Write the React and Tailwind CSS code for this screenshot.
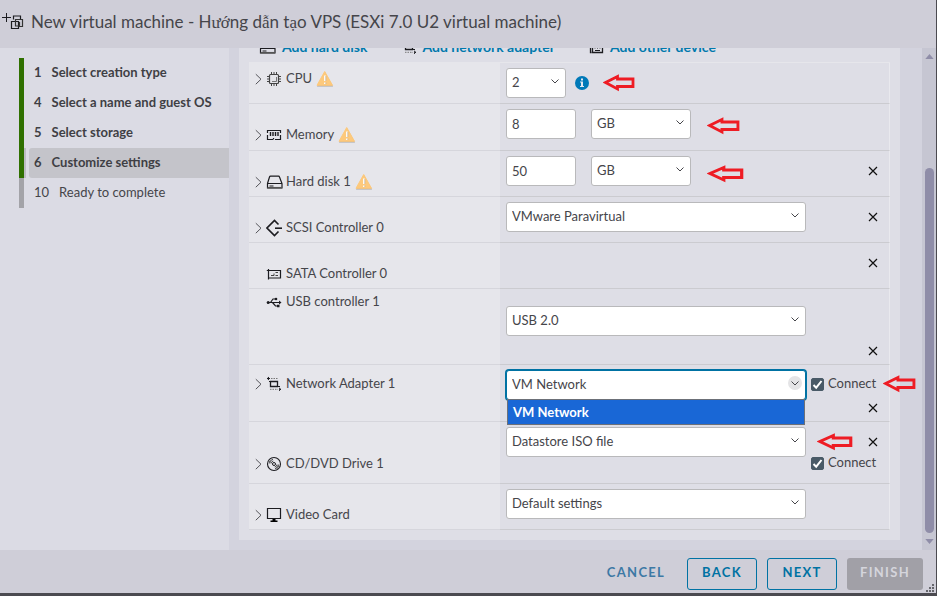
import React, { useState } from 'react';

const steps = [
  { num: 1, title: 'Select creation type', state: 'done' },
  { num: 4, title: 'Select a name and guest OS', state: 'done' },
  { num: 5, title: 'Select storage', state: 'done' },
  { num: 6, title: 'Customize settings', state: 'current' },
  { num: 10, title: 'Ready to complete', state: 'todo' },
];

/* Icons */
function Icon({ children, className = 'w-4 h-4', box = '0 0 16 16' }) {
  return (
    <svg viewBox={box} className={`shrink-0 ${className}`} fill="none" stroke="#1c1c20" strokeWidth="1" aria-hidden="true">
      {children}
    </svg>
  );
}

function VmIcon() {
  return (
    <Icon className="w-6 h-5" box="0 0 24 20">
      <path d="M2 5.5h9M6.500 1v9" />
      <path d="M13.500 7.500V4h7v3M11.500 9.500h7v7h-7z" strokeWidth="1.200" />
      <path d="M19 14.500h3.500v-7h-7v6.500h4v-4" strokeWidth="1.200" stroke="#333" />
    </Icon>
  );
}

function CpuIcon() {
  return (
    <Icon>
      <rect x="3.5" y="3.5" width="9" height="9" rx="1" stroke="#444" strokeWidth="1.2" />
      <path d="M10.5 6v4.5H6" stroke="#777" />
      <path d="M5.5 1v2M8 1v2M10.5 1v2M5.5 13v2M8 13v2M10.5 13v2M1 5.5h2M1 8h2M1 10.5h2M13 5.5h2M13 8h2M13 10.5h2" stroke="#444" />
    </Icon>
  );
}

function MemoryIcon() {
  return (
    <Icon>
      <path d="M1.5 6V3.5h13V6M1.5 8v4.5H7M9 12.5h5.5V8M7.5 11v1.5" strokeWidth="1.2" />
      <path d="M4.5 5v4M7 5v4M9.5 5v4M12 5v4" strokeWidth="1.4" />
    </Icon>
  );
}

function DiskIcon() {
  return (
    <Icon className="w-[18px] h-4" box="0 0 18 16">
      <path d="M1.5 9.500L3.500 3q.3-.8 1-.8h8q.8 0 1 .8l2.500 6.500v4.500H1.500z" strokeWidth="1.2" />
      <path d="M1.500 9.500h14.500M3.500 12h4" />
      <path d="M1.500 13.700h14.500" stroke="#555" strokeWidth="1.500" />
    </Icon>
  );
}

function ScsiIcon() {
  return (
    <Icon className="w-[18px] h-[18px]" box="0 0 18 18">
      <path d="M12.500 5.500L8.500 1.500L1 9l7.500 7.500l4-4" strokeWidth="1.600" />
      <path d="M9 9.200h7" strokeWidth="1.600" />
    </Icon>
  );
}

function SataIcon() {
  return (
    <Icon>
      <path d="M.8 4.500h13.700v7.500H2.500M2.500 3v10.500" strokeWidth="1.200" />
      <path d="M5 9.500h3v-2M9.500 6.500H12M9.500 9.500H12" stroke="#444" />
    </Icon>
  );
}

function UsbIcon() {
  return (
    <Icon>
      <path d="M2 8.500h12M4.500 8.500L7 5h2.500M6.500 8.500l3 3.500H12" strokeWidth="1.200" />
      <circle cx="2.200" cy="8.500" r="1.500" fill="#1c1c20" stroke="none" />
      <circle cx="10" cy="5" r="1.300" fill="#1c1c20" stroke="none" />
      <path d="M13 6.500l2.500 2l-2.500 2zM11 10.800h2.500v2.400H11z" fill="#1c1c20" stroke="none" />
    </Icon>
  );
}

function NetworkIcon() {
  return (
    <Icon>
      <path d="M4.500 5.500h7v5h-7z" strokeWidth="1.300" />
      <path d="M3 5.500h1.500M11.500 10.500H14" />
      <path d="M1 2.500h3" />
      <path d="M5 2.500h7" strokeDasharray="1.500 1" stroke="#777" />
      <path d="M3 1L1.300 2.500L3 4M13 13.300h2M13 11.800l1.700 1.500l-1.700 1.500" />
      <path d="M4 13.300h8" strokeDasharray="1.500 1" stroke="#777" />
    </Icon>
  );
}

function DiscIcon() {
  return (
    <Icon>
      <circle cx="8" cy="8" r="6.500" strokeWidth="1.100" />
      <circle cx="8" cy="8" r="1.500" />
      <path d="M3.300 7.500A4.800 4.800 0 0 1 7 3.300M5 7.500A3 3 0 0 1 7.300 5M12.700 8.500A4.800 4.800 0 0 1 9 12.700M11 8.500A3 3 0 0 1 8.700 11" strokeWidth=".8" />
      <path d="M2.500 5L5.500 6.500M10.500 9.500l3 1.500M10 10.500l1.500 2.500" stroke="#666" />
    </Icon>
  );
}

function ScreenIcon() {
  return (
    <Icon>
      <path d="M1.500 1.500h13v10h-13z" strokeWidth="1.200" />
      <path d="M6.500 12h3v1.500h2V15h-7v-1.500h2z" fill="#000" stroke="none" />
    </Icon>
  );
}

function OtherIcon() {
  return (
    <Icon>
      <path d="M1.500 2v11.500h1M3.500 4.500h10v9h-10z" strokeWidth="1.300" />
      <path d="M6 7v2.500M8.500 7v2.500M11 7v2.500M6 11.500h5" />
    </Icon>
  );
}

function WarningIcon() {
  return (
    <svg viewBox="0 0 18 16" className="w-[18px] h-4 shrink-0" role="img" aria-label="Warning">
      <path d="M9 1L17 15.500H1z" fill="#a5a3a3" />
      <path d="M8.700 .5L16.500 14.300H1z" fill="#fdc97c" stroke="#fdc97c" strokeLinejoin="round" />
      <path d="M8.900 4.500v5.500M8.900 11.500v1.500" stroke="#fff" strokeWidth="1.600" />
      <path d="M9.800 5v5M9.800 11.500v1.500" stroke="#aaa" strokeWidth=".6" />
    </svg>
  );
}

function RedArrow({ className = 'w-8 h-[18px]' }) {
  return (
    <svg viewBox="0 0 32 18" className={`shrink-0 ${className}`} preserveAspectRatio="none" aria-hidden="true">
      <path d="M2.500 8.500L14.500 2.500V5H30V12.500H14.500V15z" fill="none" stroke="#ee1c24" strokeWidth="2.800" />
    </svg>
  );
}

function RemoveButton({ className = '' }) {
  return (
    <button type="button" aria-label="Remove" className={`w-4 h-4 flex items-center justify-center shrink-0 ${className}`}>
      <svg viewBox="0 0 10 10" className="w-2.5 h-2.5" stroke="#111" strokeWidth="1.2">
        <path d="M1 1l8 8M9 1l-8 8" />
      </svg>
    </button>
  );
}

function Select({ label, options, className = 'w-[300px]', open = false }) {
  return (
    <div className={`relative shrink-0 ${className}`}>
      <select
        aria-label={label}
        defaultValue={options[0]}
        className={`block w-full h-[30px] appearance-none rounded-[3px] bg-white pl-[5px] pr-6 text-[13px] text-[#45454a] border outline-none ${
          open ? 'border-[#0072a3] ring-1 ring-[#0072a3]' : 'border-[#b9b9bb]'
        }`}
      >
        {options.map((option) => <option key={option}>{option}</option>)}
      </select>
      <span className={`absolute right-1 top-1.5 w-3.5 h-3.5 rounded-full pointer-events-none flex items-center justify-center ${open ? 'bg-[#e4e4e6]' : ''}`}>
        <svg viewBox="0 0 8 5" className="w-2 h-[5px]" fill="none" stroke="#45454a">
          <path d="M.5 .5L4 4L7.500 .5" />
        </svg>
      </span>
      {open && (
        <div className="absolute z-10 left-px right-px top-[29px] h-[26px] px-[5px] leading-6 bg-[#1967d6] border border-[#6c7078] text-white font-bold">
          {options[0]}
        </div>
      )}
    </div>
  );
}

function TextBox({ label, value }) {
  return (
    <input
      type="text"
      aria-label={label}
      defaultValue={value}
      className="w-[70px] h-[30px] rounded-[3px] bg-white border border-[#b9b9bb] px-[5px] text-[13px] text-[#45454a] outline-none"
    />
  );
}

function Connect() {
  const [checked, setChecked] = useState(true);

  return (
    <label className="flex items-center gap-1 h-5">
      <span className="relative w-[13px] h-[13px]">
        <input
          type="checkbox"
          checked={checked}
          onChange={(e) => setChecked(e.target.checked)}
          className="block w-[13px] h-[13px] appearance-none rounded-[2px] border border-[#495a67] checked:bg-[#495a67]"
        />
        {checked && (
          <svg viewBox="0 0 13 13" className="absolute inset-0 pointer-events-none" fill="none" stroke="#fff" strokeWidth="2">
            <path d="M2.500 7l2.700 2.700L10.500 3" />
          </svg>
        )}
      </span>
      Connect
    </label>
  );
}

function Row({ icon, name, height, labelPad, fieldPad = 'pt-[5px]', expandable = true, warning, children }) {
  return (
    <div className={`flex ${height}`}>
      <div className={`w-[251px] shrink-0 bg-[#e6e6eb] border-b border-[#d6d6dc] ${labelPad}`}>
        <div className="flex items-center h-5 pl-1.5">
          {expandable ? (
            <button type="button" aria-label={`Expand ${name}`} className="w-[11px] h-5 shrink-0">
              <svg viewBox="0 0 11 20" className="w-[11px] h-5" fill="none" stroke="#55555a">
                <path d="M.8 5.200L6 10.200L.8 15.200" />
              </svg>
            </button>
          ) : <span className="w-[11px]" />}
          <span className="w-[18px] h-5 flex items-center shrink-0">{icon}</span>
          <span className="leading-5 pl-0.5 pb-0.5">{name}</span>
          {warning && <span className="ml-1"><WarningIcon /></span>}
        </div>
      </div>
      <div className={`flex-1 flex items-start pl-1.5 pr-2 border-b border-r border-b-[#cbcbd0] border-r-[#e9e9ee] ${fieldPad}`}>
        {children}
      </div>
    </div>
  );
}

function HardwareTable() {
  return (
    <div className="border-t border-[#e6e6eb]">
      <Row icon={<CpuIcon />} name="CPU" warning height="min-h-[41px]" labelPad="pt-1.5">
        <Select label="CPU" options={['2', '1', '4']} className="w-[60px]" />
        <svg viewBox="0 0 14 14" className="w-3.5 h-3.5 ml-[9px] mt-2" role="img" aria-label="Info">
          <circle cx="7" cy="7" r="7" fill="#0079b8" />
          <path d="M6 2.500h2v2H6zM5 5.500h3v4.500h1v1H5v-1h1V6.500H5z" fill="#e4e8f0" />
        </svg>
        <RedArrow className="w-8 h-[18px] ml-3.5 mt-1.5" />
      </Row>
      <Row icon={<MemoryIcon />} name="Memory" warning height="min-h-[47px]" labelPad="pt-[21px]">
        <TextBox label="Memory" value="8" />
        <Select label="Memory unit" options={['GB', 'MB']} className="w-[100px] ml-[15px]" />
        <RedArrow className="w-[33px] h-[18px] ml-4 mt-2" />
      </Row>
      <Row icon={<DiskIcon />} name="Hard disk 1" warning height="min-h-[46px]" labelPad="pt-[21px]">
        <TextBox label="Hard disk 1" value="50" />
        <Select label="Hard disk unit" options={['GB', 'MB', 'TB']} className="w-[100px] ml-[15px]" />
        <RedArrow className="w-[37px] h-[18px] ml-4 mt-[9px]" />
        <RemoveButton className="ml-auto mt-[7px]" />
      </Row>
      <Row icon={<ScsiIcon />} name="SCSI Controller 0" height="min-h-[46px]" labelPad="pt-[21px]">
        <Select label="SCSI Controller 0" options={['VMware Paravirtual', 'LSI Logic SAS']} />
        <RemoveButton className="ml-auto mt-[7px]" />
      </Row>
      <Row icon={<SataIcon />} name="SATA Controller 0" expandable={false} height="min-h-[46px]" labelPad="pt-[21px]">
        <RemoveButton className="ml-auto mt-[7px]" />
      </Row>
      <Row icon={<UsbIcon />} name="USB controller 1" expandable={false} height="min-h-[76px]" labelPad="pt-[3px]" fieldPad="pt-[17px]">
        <Select label="USB controller 1" options={['USB 2.0', 'USB 3.1']} />
        <RemoveButton className="ml-auto mt-[37px]" />
      </Row>
      <Row icon={<NetworkIcon />} name="Network Adapter 1" height="min-h-[57px]" labelPad="pt-[9px]">
        <Select label="Network Adapter 1" options={['VM Network']} open />
        <div className="relative flex-1 flex flex-col pl-[5px] pt-1">
          <Connect />
          <RemoveButton className="self-end mt-1.5" />
          <RedArrow className="absolute -right-[35px] top-[5px] w-[33px] h-[18px]" />
        </div>
      </Row>
      <Row icon={<DiscIcon />} name="CD/DVD Drive 1" height="min-h-[62px]" labelPad="pt-8">
        <Select label="CD/DVD Drive 1" options={['Datastore ISO file', 'Host device']} />
        <div className="flex-1 flex flex-col pl-[5px] pt-1">
          <div className="flex items-center justify-between h-[22px] pl-1.5">
            <RedArrow className="w-9 h-[18px]" />
            <RemoveButton />
          </div>
          <Connect />
        </div>
      </Row>
      <Row icon={<ScreenIcon />} name="Video Card" height="min-h-[46px]" labelPad="pt-[21px]">
        <Select label="Video Card" options={['Default settings', 'Custom']} />
      </Row>
    </div>
  );
}

function Scrollbar() {
  return (
    <div className="w-3.5 shrink-0 bg-[#c6c6d2] flex flex-col items-center py-1.5 pl-px" aria-hidden="true">
      <svg viewBox="0 0 10 6" className="w-[9px] h-[5px] shrink-0"><path d="M5 0l5 6H0z" fill="#8f8da8" /></svg>
      <div className="flex-[23]" />
      <div className="flex-[77] w-[9px] rounded-full bg-[#8f8da8]" />
      <svg viewBox="0 0 10 6" className="w-[9px] h-[5px] mt-1.5 shrink-0"><path d="M0 0h10L5 6z" fill="#8f8da8" /></svg>
    </div>
  );
}

function App() {
  return (
    <div className="h-screen bg-white pr-0.5 pb-0.5 font-['Lato',sans-serif] text-[13px] text-[#45454a]">
      <div className="h-full flex flex-col bg-[#cfced8] border-r border-b-[3px] border-[#4b4a50]">
        {/* Title bar */}
        <header className="h-12 shrink-0 flex items-center gap-[7px]">
          <span className="pb-1"><VmIcon /></span>
          <h1 className="text-[17px] leading-6 whitespace-nowrap pb-1">
            New virtual machine - H<span className="font-['Liberation_Serif',serif]">ướ</span>ng d
            <span className="font-['Liberation_Serif',serif]">ẫ</span>n t
            <span className="font-['Liberation_Serif',serif]">ạ</span>o VPS (ESXi 7.0 U2 virtual machine)
          </h1>
        </header>

        <div className="flex-1 min-h-0 flex overflow-hidden">
          {/* Wizard steps */}
          <nav className="w-[229px] shrink-0 bg-[#dbdbe4] pt-2.5 pl-[19px]">
            <ol>
              {steps.map((step) => (
                <li
                  key={step.num}
                  className={`h-[30px] flex border-l-[5px] ${step.state === 'todo' ? 'border-[#a3a3a8]' : 'border-[#2f7000]'}`}
                >
                  <span className={`w-0.5 mr-[3px] ${step.state === 'current' ? 'bg-[#bcbcc2]' : ''}`} />
                  <button
                    type="button"
                    className={`flex-1 flex items-center gap-2.5 pl-[5px] rounded-l-[3px] text-left whitespace-nowrap ${
                      step.state === 'current' ? 'bg-[#c4c4ca]' : ''
                    } ${step.state === 'todo' ? '' : 'font-bold text-[#3f3f44]'}`}
                  >
                    <span>{step.num}</span>
                    <span>{step.title}</span>
                  </button>
                </li>
              ))}
            </ol>
          </nav>

          {/* Settings */}
          <main className="flex-1 bg-[#d3d3de] flex">
            <div className="flex-1 ml-2.5 mr-[22px]">
              <div className="bg-[#dedee6] px-2.5 pb-2.5">
                {/* Toolbar, scrolled partly under the title bar */}
                <div className="h-7 -mt-3.5 pb-[3px] pl-2.5 flex items-center gap-[34px] text-[14px] font-bold text-[#0079ad]">
                  <button type="button" className="flex items-center gap-[5px]"><DiskIcon />Add hard disk</button>
                  <button type="button" className="flex items-center gap-[5px]"><NetworkIcon />Add network adapter</button>
                  <button type="button" className="flex items-center gap-[5px]"><OtherIcon />Add other device</button>
                </div>
                <HardwareTable />
              </div>
            </div>
            <Scrollbar />
          </main>
        </div>

        {/* Actions */}
        <footer className="relative shrink-0 flex justify-end gap-2.5 pt-2 pb-[3px] pr-[13px] text-[13px] font-bold tracking-widest">
          <button type="button" className="h-8 w-[82px] pb-0.5 text-[#3d79a5]">CANCEL</button>
          <button type="button" className="h-8 w-[70px] pb-0.5 rounded-[3px] border border-[#0072a3] text-[#0072a3]">BACK</button>
          <button type="button" className="h-8 w-[70px] pb-0.5 rounded-[3px] border border-[#0072a3] text-[#0072a3]">NEXT</button>
          <button type="button" disabled className="h-8 w-[76px] pb-0.5 rounded-[3px] bg-[#a1a0a7] text-[#d5d5dc]">FINISH</button>
          <svg viewBox="0 0 8 8" className="absolute right-0.5 bottom-px w-2 h-2" fill="#66666c" aria-hidden="true">
            <path d="M6 0h2v2H6zM3 3h2v2H3zM6 3h2v2H6zM0 6h2v2H0zM3 6h2v2H3zM6 6h2v2H6z" />
          </svg>
        </footer>
      </div>
    </div>
  );
}

export default App;
